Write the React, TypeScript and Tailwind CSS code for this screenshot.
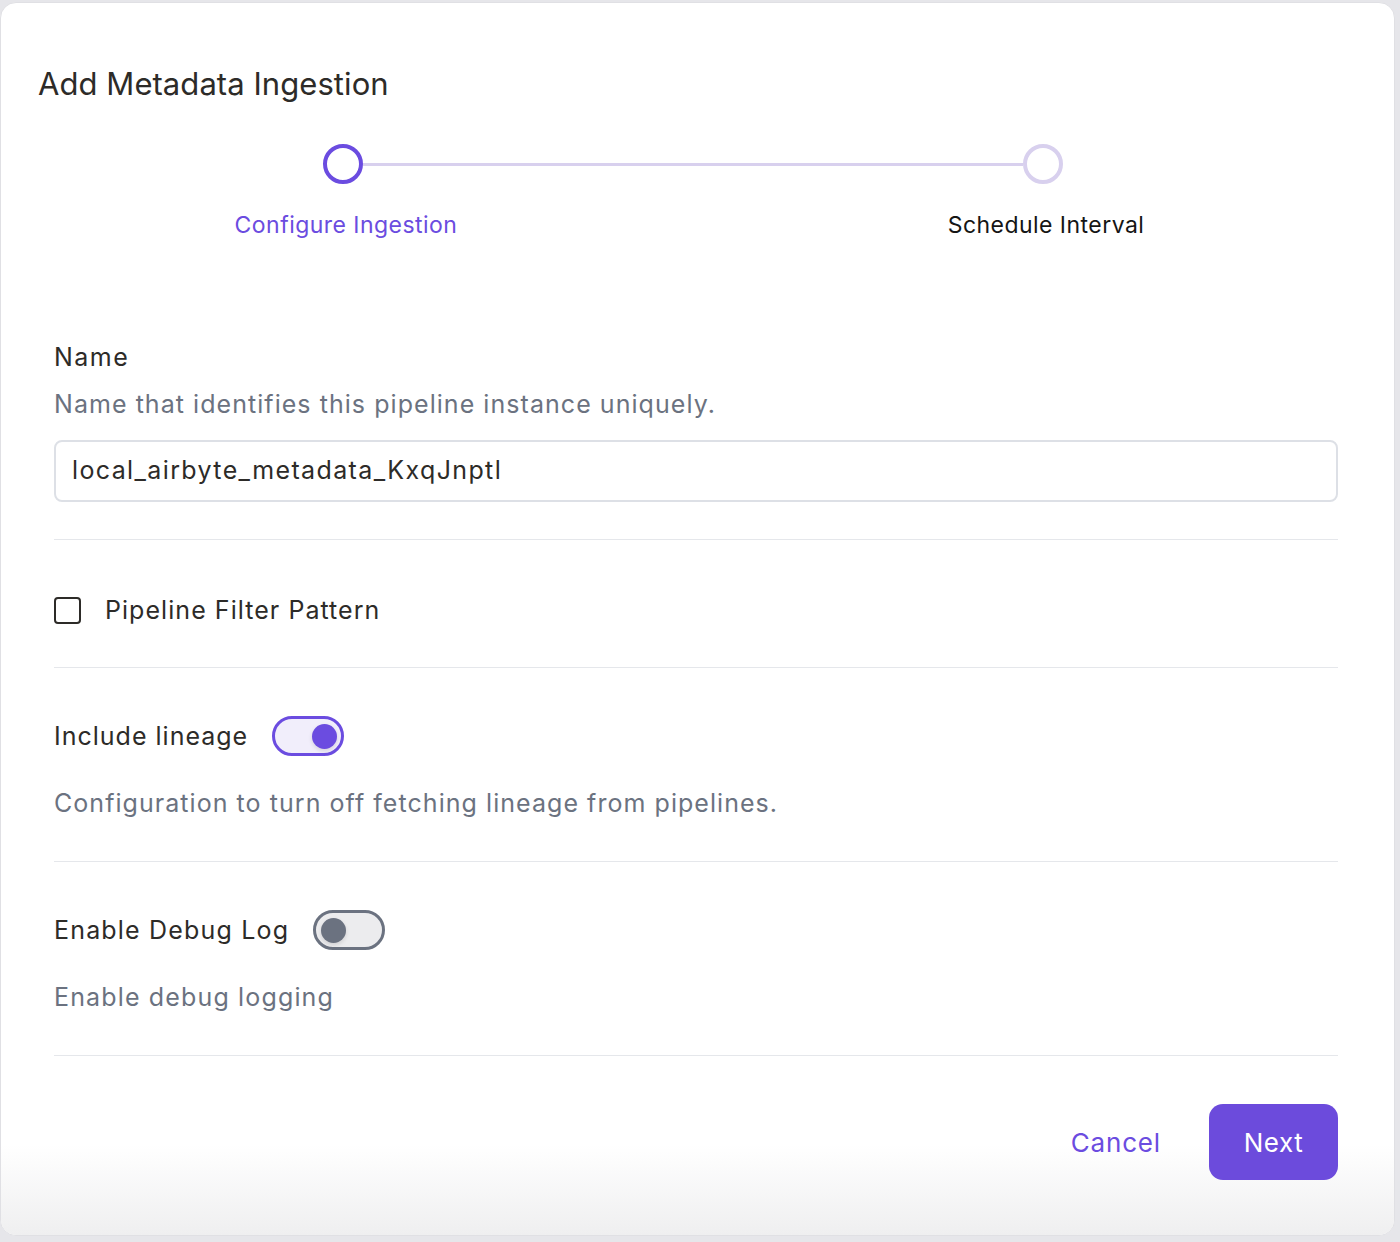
import React from 'react';

const Divider = () => <div className="h-px w-full bg-[#e5e7eb]" />;

const Toggle = ({ on }: { on: boolean }) =>
  on ? (
    <div className="flex h-[40px] w-[72px] items-center justify-end rounded-full border-[3px] border-[#6b4ce0] bg-[#f1eefb] pr-[4px]">
      <div className="h-[25px] w-[25px] rounded-full bg-[#6b4ce0] shadow-[0_2px_4px_rgba(0,0,0,0.12)]" />
    </div>
  ) : (
    <div className="flex h-[40px] w-[72px] items-center justify-start rounded-full border-[3px] border-[#6b7280] bg-[#ececee] pl-[5px]">
      <div className="h-[25px] w-[25px] rounded-full bg-[#6b7280] shadow-[0_2px_4px_rgba(0,0,0,0.12)]" />
    </div>
  );

export default function App() {
  return (
    <div className="min-h-[1242px] bg-[#e6e6ea] pt-[2px] font-['Inter',sans-serif]">
      <div className="relative h-[1234px] w-[1395px] overflow-hidden rounded-[16px] border border-[#e0e0e4] bg-white">
        <div className="pointer-events-none absolute inset-x-0 bottom-0 h-[90px] bg-gradient-to-b from-white to-[#efeff0]" />

        {/* Header + stepper */}
        <div className="relative pl-[37px] pt-[61px]">
          <h1 className="text-[31px] leading-[40px] tracking-[0.002em] text-[#2d2b28]">Add Metadata Ingestion</h1>
          <div className="mt-[40px] flex items-center pl-[285px]">
            <div className="h-[40px] w-[40px] rounded-full border-[4px] border-[#6b4ce0]" />
            <div className="h-[3px] w-[660px] bg-[#d8d0ee]" />
            <div className="h-[40px] w-[40px] rounded-full border-[4px] border-[#d8d0ee]" />
          </div>
        </div>
        <div className="relative mt-[26px] flex text-[23px] leading-[30px] tracking-[0.02em]">
          <div className="ml-[195px] w-[300px] text-center text-[#6b4ce0]">Configure Ingestion</div>
          <div className="ml-[400px] w-[300px] text-center text-[#151515]">Schedule Interval</div>
        </div>

        {/* Form */}
        <div className="relative pl-[53px] pr-[56px] pt-[101px]">
          <div className="text-[25px] leading-[32px] tracking-[0.06em] text-[#2d2b28]">Name</div>
          <div className="mt-[15px] text-[25px] leading-[32px] tracking-[0.042em] text-[#6b7280]">
            Name that identifies this pipeline instance uniquely.
          </div>
          <div className="mt-[20px] flex h-[62px] items-center rounded-[8px] border-2 border-[#dde0e6] px-[16px] text-[25px] tracking-[0.055em] text-[#2d2b28]">
            local_airbyte_metadata_KxqJnptl
          </div>
          <div className="mt-[37px]">
            <Divider />
          </div>

          <div className="flex items-center gap-[24px] pb-[42px] pt-[55px]">
            <div className="h-[27px] w-[27px] rounded-[4px] border-2 border-[#2d2b28]" />
            <span className="text-[25px] leading-[30px] tracking-[0.042em] text-[#2d2b28]">Pipeline Filter Pattern</span>
          </div>
          <Divider />

          <div className="mt-[48px] flex items-center gap-[24px]">
            <span className="text-[25px] leading-[40px] tracking-[0.04em] text-[#2d2b28]">Include lineage</span>
            <Toggle on />
          </div>
          <div className="mt-[31px] text-[25px] leading-[32px] tracking-[0.042em] text-[#6b7280]">
            Configuration to turn off fetching lineage from pipelines.
          </div>
          <div className="mt-[42px]">
            <Divider />
          </div>

          <div className="mt-[48px] flex items-center gap-[24px]">
            <span className="text-[25px] leading-[40px] tracking-[0.047em] text-[#2d2b28]">Enable Debug Log</span>
            <Toggle on={false} />
          </div>
          <div className="mt-[31px] text-[25px] leading-[32px] tracking-[0.046em] text-[#6b7280]">Enable debug logging</div>
          <div className="mt-[42px]">
            <Divider />
          </div>

          <div className="mt-[48px] flex items-center justify-end gap-[48px]">
            <button className="text-[26px] tracking-[0.032em] text-[#6b4ce0]">Cancel</button>
            <button className="h-[76px] w-[129px] rounded-[14px] bg-[#6c4bdc] text-[26px] tracking-[0.02em] text-white">Next</button>
          </div>
        </div>
      </div>
    </div>
  );
}
